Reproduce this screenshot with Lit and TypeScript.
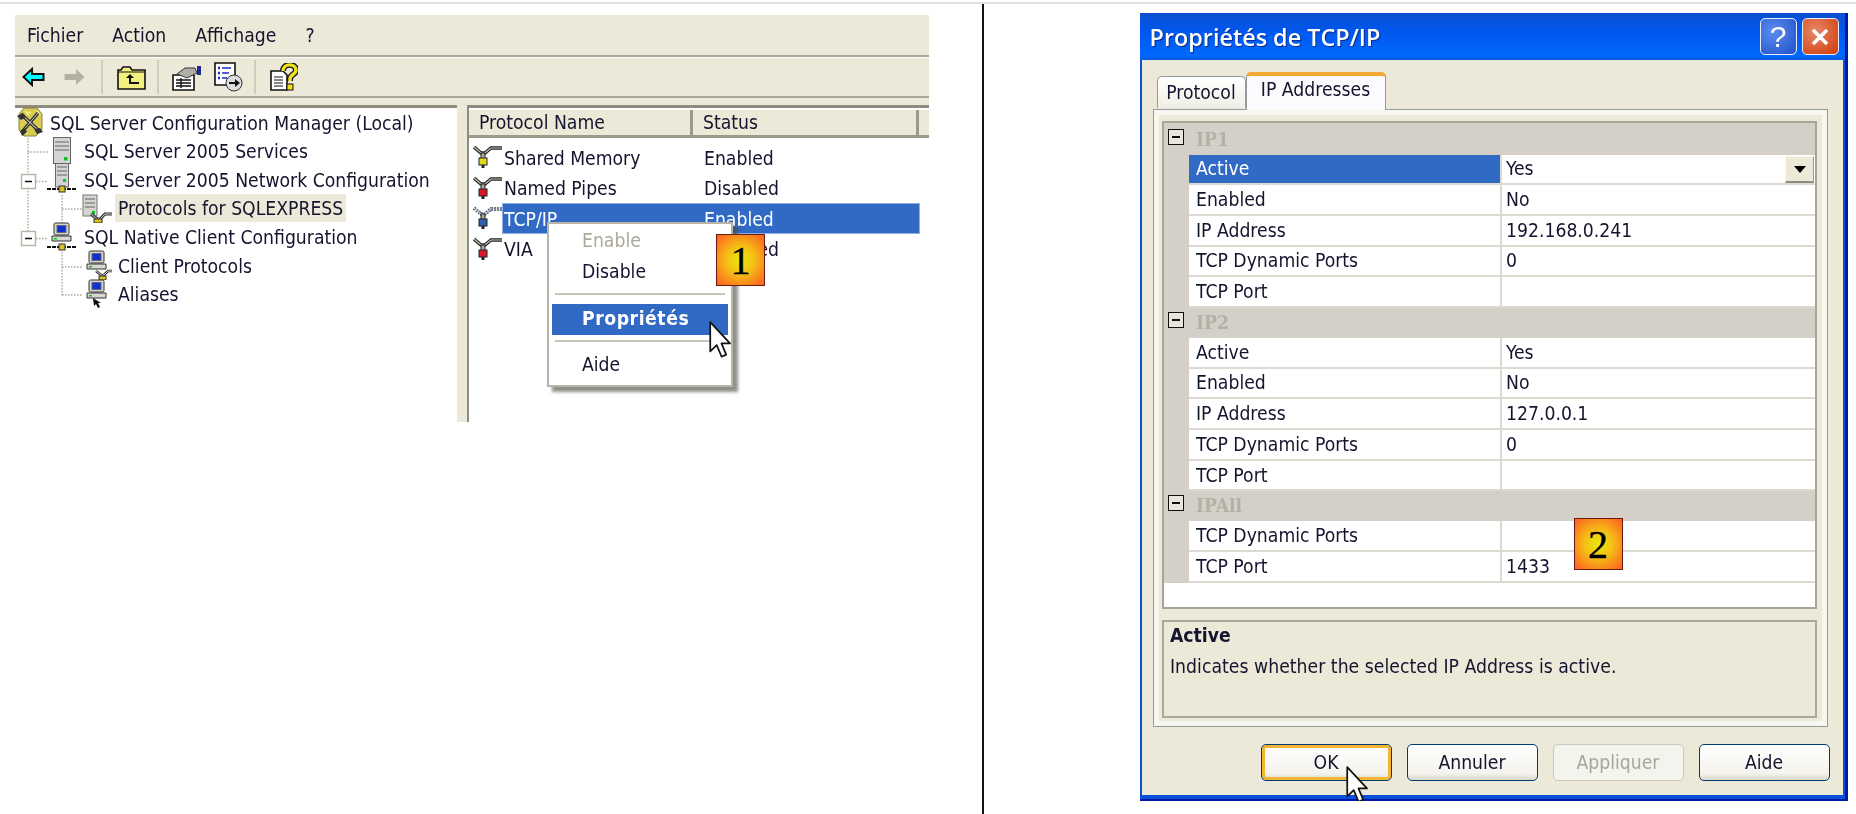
import { LitElement, html, svg, css } from "lit";
import { customElement } from "lit/decorators.js";

const cursor = html`<svg width="23" height="38" viewBox="0 0 12 20"><path d="M.6.6V16L4 12.7 6.6 18.8 9 17.7 6.5 11.8H11Z" fill="#fff" stroke="#111" stroke-width=".9" stroke-linejoin="round"/></svg>`;

const proto = (c: string, dotted = false) => html`<svg width="29" height="24" viewBox="0 0 29 24">
  <path d="M1 2l7 6h4l6-5h11" fill="none" stroke="${dotted ? "#3a4a70" : "#222"}" stroke-width="3.4" stroke-dasharray="${dotted ? "2 1" : "none"}"/>
  <path d="M1 2l7 6h4l6-5h11" fill="none" stroke="#c8c8c0" stroke-width="1.2"/>
  <rect x="8" y="8" width="4" height="6" fill="#a8a8a0" stroke="#222"/>
  <rect x="6" y="13" width="8" height="7" fill="${c}" stroke="#222"/>
  <rect x="8.5" y="20" width="3" height="3" fill="#222"/></svg>`;

const netBase = svg`<path d="M0 25H30" stroke="#111" stroke-width="2" stroke-dasharray="4 1"/><rect x="12" y="22" width="6" height="6" fill="#d8c020" stroke="#333"/>`;

const tower = html`<svg width="30" height="28" viewBox="0 0 30 28"><rect x="6.5" y=".5" width="17" height="26" fill="#d4d4d4" stroke="#666"/>
  <path d="M8 5h14M8 9h14M8 13h14" stroke="#8a8a8a" stroke-width="1.6"/><rect x="17" y="20" width="3.5" height="3.5" fill="#10c020"/></svg>`;

const towerNet = html`<svg width="30" height="30" viewBox="0 0 30 30"><rect x="8.5" y="-3" width="13" height="26" fill="#d4d4d4" stroke="#666"/>
  <path d="M10 3h10M10 7h10M10 11h10" stroke="#8a8a8a" stroke-width="1.6"/><rect x="16" y="15" width="3" height="3" fill="#12c020"/>${netBase}</svg>`;

const pc = (net: boolean, extra = "") => html`<svg width="30" height="30" viewBox="0 0 30 30">
  <rect x="7" y="1" width="15" height="12" rx="1.5" fill="#d4d4cc" stroke="#333"/><rect x="10" y="3.5" width="9" height="7" fill="#1030d0" stroke="#667"/>
  <path d="M5 14h19v5H5z" fill="#d8d8d0" stroke="#333"/><rect x="7" y="16" width="3" height="1.5" fill="#10c020"/>
  ${net ? netBase : ""}
  ${extra === "y" ? svg`<path d="M14 21l5 4h3l4-4h4" fill="none" stroke="#333" stroke-width="2.6"/><path d="M14 21l5 4h3l4-4h4" fill="none" stroke="#ccc" stroke-width="1"/><rect x="17" y="26" width="7" height="4" fill="#d8c020" stroke="#333"/>` : ""}
  ${extra === "a" ? svg`<path d="M11 19l1 8 2-2 2 4 2-1-2-4h3z" fill="#111"/>` : ""}
</svg>`;

const proto2 = html`<svg width="30" height="29" viewBox="0 0 30 29">
  <rect x="1" y="1" width="14" height="21" fill="#d4d4d0" stroke="#777"/><path d="M3 5h10M3 9h10M3 13h10" stroke="#888" stroke-width="1.5"/><rect x="10" y="17" width="3" height="3" fill="#10c020"/>
  <path d="M9 20l6 5h3l5-5h7" fill="none" stroke="#333" stroke-width="3"/><path d="M9 20l6 5h3l5-5h7" fill="none" stroke="#ccc" stroke-width="1"/><rect x="12" y="25" width="8" height="4" fill="#d8c020" stroke="#333"/></svg>`;

const rootIcon = html`<svg width="28" height="30" viewBox="0 0 28 30">
  <path d="M8 1h13l5 6v15l-6 7H8l-5-6V7z" fill="#d8cc50" stroke="#8a8040"/>
  <path d="M9 4l3 3 3-2M21 4l3 4M8 24l3 3M20 25l4-4" fill="none" stroke="#f4ec80" stroke-width="2"/>
  <path d="M5 7l17 16M22 6L6 25" stroke="#222" stroke-width="3.4"/><path d="M5 7l17 16M22 6L6 25" stroke="#bbb" stroke-width="1.1"/>
  <path d="M1 9l6-3 3 4-5 3zM18 22l6-1 3 4-6 2zM4 24l5-3 2 4-5 4z" fill="#333"/></svg>`;

const backIcon = html`<svg width="23" height="20" viewBox="0 0 23 20"><path d="M1.5 10L10 2v5h11.5v6H10v5z" fill="#00ffff" stroke="#111" stroke-width="2"/></svg>`;
const fwdIcon = html`<svg width="23" height="20" viewBox="0 0 23 20"><path d="M21.5 10L13 2v5H1.5v6H13v5z" fill="#b4b1a0"/></svg>`;

const folderUp = html`<svg width="29" height="25" viewBox="0 0 29 25"><path d="M1 5h3l2-3h7l2 3h13v19H1z" fill="#f4f080" stroke="#111" stroke-width="1.6"/><path d="M1 7h27" stroke="#111"/><path d="M9 13l4-4 4 4h-3v4h8v2H12v-6z" fill="#111"/></svg>`;
const propsIcon = html`<svg width="31" height="27" viewBox="0 0 31 27"><path d="M2 11h21v15H2z" fill="#fff" stroke="#111" stroke-width="1.6"/><path d="M5 16h15M5 19h15M5 22h15M10 14v10" stroke="#111" stroke-width="1.4"/><path d="M6 10l8-6h10l2 5-10 5z" fill="#b0b0a8" stroke="#333"/><rect x="26" y="2" width="4" height="9" fill="#1a2a90"/></svg>`;
const exportIcon = html`<svg width="31" height="30" viewBox="0 0 31 30"><path d="M2 1h20v22H2z" fill="#fff" stroke="#111" stroke-width="1.6"/><path d="M5 6h2M5 11h2M5 16h2" stroke="#1a2ac0" stroke-width="2.4"/><path d="M9 6h9M9 11h7M9 16h5" stroke="#1a2ac0" stroke-width="1.4"/><circle cx="21" cy="21" r="8" fill="#ddd" stroke="#333"/><path d="M16 20h6v-3l5 4-5 4v-3h-6z" fill="#111"/></svg>`;
const helpIcon = html`<svg width="28" height="28" viewBox="0 0 28 28"><path d="M1 8h12l4 4v15H1z" fill="#fff" stroke="#111" stroke-width="1.6"/><path d="M4 14h9M4 17h9M4 20h9M4 23h9" stroke="#111"/><path d="M13 8c0-8 13-8 13-1 0 5-6 4-6 9v2" fill="none" stroke="#111" stroke-width="6"/><path d="M13 8c0-8 13-8 13-1 0 5-6 4-6 9v2" fill="none" stroke="#f0e020" stroke-width="3.4"/><rect x="17" y="21" width="6" height="6" fill="#f0e020" stroke="#111"/></svg>`;

const guides = html`<svg class="guides" width="120" height="230" viewBox="0 0 120 230">
  <path d="M13 30V66M13 80V123M13 44H33M47 87V187M47 101H67M47 159H67M47 187H67" fill="none" stroke="#a8a898" stroke-width="1.4" stroke-dasharray="1.5 1.5"/>
  <g fill="#fff" stroke="#b4b4a4" stroke-width="1.4"><rect x="6.5" y="66.5" width="14" height="14"/><rect x="6.5" y="123.5" width="14" height="14"/></g>
  <path d="M10 73.5h7M10 130.5h7" stroke="#111" stroke-width="1.6"/>
  <path d="M21 73.5H33M21 130.5H33" stroke="#a8a898" stroke-width="1.4" stroke-dasharray="1.5 1.5"/>
</svg>`;

@customElement("app-root")
export class AppRoot extends LitElement {
  static styles = css`
    :host { display: block; height: 814px; overflow: hidden; background: #fff; font-family: "DejaVu Sans", "Liberation Sans", sans-serif; font-stretch: condensed; font-size: 19.2px; color: #14142e; }
    .rule { height: 2px; margin-top: 2px; background: #e2e2e2; }
    .main { display: flex; height: 810px; }
    .left { width: 982px; flex: none; padding: 11px 0 0 15px; box-sizing: border-box; position: relative; }
    .vline { width: 1.5px; flex: none; background: #111; }
    .right { flex: 1; padding: 9px 0 0 156px; box-sizing: border-box; }

    .win { width: 914px; height: 407px; display: flex; flex-direction: column; background: #ece9d8; filter: blur(.35px); position: relative; overflow: hidden; }
    .menubar { height: 40px; display: flex; align-items: center; gap: 29px; padding-left: 12px; border-bottom: 2px solid #aca899; flex: none; }
    .toolbar { height: 41px; flex: none; display: flex; align-items: center; border-top: 1px solid #fff; border-bottom: 2px solid #aca899; box-sizing: border-box; padding-left: 7px; }
    .toolbar svg { display: block; flex: none; }
    .tsep { width: 2px; height: 34px; background: #d0cdbc; flex: none; }
    .g18 { margin-left: 18px; } .g15 { margin-left: 15px; } .g14 { margin-left: 14px; } .g11 { margin-left: 11px; } .g12 { margin-left: 12px; } .g10 { margin-left: 10px; }
    .panes { flex: 1; display: flex; padding-top: 7px; min-height: 0; }
    .tree { width: 442px; flex: none; background: #fff; border-top: 3px solid #8e8c7e; position: relative; box-sizing: border-box; }
    .guides { position: absolute; left: 0; top: 0; }
    .trow { height: 28.6px; display: flex; align-items: center; position: relative; white-space: nowrap; }
    .trow svg { display: block; flex: none; }
    .tx { padding-top: 2px; }
    .ic { width: 30px; flex: none; display: flex; justify-content: center; align-items: center; height: 28.6px; }
    .r0 { padding-left: 1px; } .r0 .ic { width: 28px; margin-right: 6px; }
    .r1 { padding-left: 32px; } .r1 .ic { margin-right: 7px; }
    .r2 { padding-left: 67px; } .r2 .ic { margin-right: 6px; }
    .cur { background: #ece9d8; padding: 0 3px; height: 28px; line-height: 29px; margin-left: -3px; }
    .splitter { width: 10px; flex: none; }
    .list { flex: 1; background: #fff; border-left: 2px solid #8e8c7e; border-top: 3px solid #8e8c7e; position: relative; min-width: 0; }
    .lhead { display: flex; height: 30px; background: #ece9d8; border-bottom: 3px solid #9c9a8c; border-top: 2px solid #fff; box-sizing: border-box; }
    .lhead div { display: flex; align-items: center; box-sizing: border-box; border-right: 3px solid #9c9a8c; flex: none; }
    .h1 { width: 224px; padding-left: 10px; } .h2 { width: 226px; padding-left: 10px; }
    .lbody { padding-top: 4px; }
    .lrow { height: 30.5px; display: flex; align-items: center; padding-left: 4px; }
    .lrow svg { flex: none; display: block; }
    .lcell { width: 418px; height: 100%; display: flex; align-items: center; flex: none; box-sizing: border-box; border: 1px solid transparent; padding-top: 2px; white-space: nowrap; }
    .lname { width: 201px; padding-left: 1px; box-sizing: border-box; flex: none; }
    .sel { background: #316ac5; border-color: #8fb0e4; color: #fff; }

    .ctx { position: absolute; left: 532px; top: 207px; width: 186px; height: 165px; box-sizing: border-box; background: #fff; border: 2px solid #b8b5a6; box-shadow: 5px 5px 3px rgba(70,70,60,.6); padding: 2px 0 4px; }
    .mi { height: 31px; display: flex; align-items: center; padding-left: 33px; padding-bottom: 2px; box-sizing: border-box; }
    .dis { color: #aca899; }
    .hot { background: #316ac5; color: #fff; font-weight: 700; margin: 0 3px 0 3px; padding-left: 30px; letter-spacing: .55px; }
    .msep { height: 2px; background: #c8c5b6; margin: 5px 6px 9px; }
    .msep2 { height: 2px; background: #c8c5b6; margin: 5px 6px 8px; }

    .overlay { position: absolute; display: block; }
    .badge { position: absolute; width: 49px; height: 52px; box-sizing: border-box; border: 1.5px solid #6a1a10; background: radial-gradient(circle at 50% 50%, #e8ea10 0%, #f4c014 40%, #ff5a24 100%); font-family: "Liberation Serif", serif; font-size: 40px; -webkit-text-stroke: .4px #000; color: #000; display: flex; align-items: center; justify-content: center; font-stretch: normal; }
    .b1 { left: 716px; top: 230px; }
    .b2 { left: 434px; top: 505px; }
    .c1 { left: 709px; top: 317px; }
    .c2 { left: 206px; top: 753px; }
    .dwrap { width: 708px; height: 788px; overflow: hidden; position: relative; }

    .dlg { width: 708px; height: 788px; box-sizing: border-box; display: flex; flex-direction: column; background: #0a50dc; filter: blur(.3px); border-right: 3px solid #0018a8; border-bottom: 2px solid #0018a8; }
    .title { height: 47px; flex: none; background: linear-gradient(#0a4fd0, #0058ee 40%, #0068ff 90%, #0a5ae0); display: flex; align-items: center; padding: 0 6px 0 10px; gap: 5px; color: #fff; }
    .ttext { flex: 1; font-family: "Open Sans", sans-serif; font-stretch: normal; font-weight: 600; font-size: 23.4px; text-shadow: 1px 1px 1px #0a2a90; }
    .tbtn { width: 37px; height: 37px; box-sizing: border-box; border: 1.5px solid #e8eefc; border-radius: 5px; display: flex; align-items: center; justify-content: center; color: #fff; font-family: "Liberation Sans", sans-serif; font-stretch: normal; font-size: 30px; }
    .thelp { background: radial-gradient(circle at 35% 35%, #5c8cf0, #2a5cd0 80%); font-weight: 400; }
    .tclose { background: radial-gradient(circle at 35% 35%, #e88a68, #d4481c 80%); }
    .tclose svg, .tbtn svg { display: block; }
    .body { flex: 1; margin: 0 2px 4px 2px; background: #ece9d8; display: flex; flex-direction: column; min-height: 0; }
    .tabs { height: 37px; margin: 12px 0 0 15px; display: flex; align-items: flex-end; flex: none; position: relative; z-index: 1; }
    .tab { height: 32px; width: 89px; box-sizing: border-box; border: 1.5px solid #919b9c; border-bottom: 0; border-radius: 5px 5px 0 0; background: linear-gradient(#fff, #f0efe6); display: flex; align-items: center; justify-content: center; margin-bottom: 1px; }
    .tab.on { height: 38px; width: 140px; background: #fbfbfd; border-top: 4px solid #f2a832; border-color: #f2a832 #919b9c #fbfbfd; margin-bottom: -1px; align-items: flex-start; padding-top: 2px; }
    .tpanel { margin-left: 11px; width: 675px; height: 618px; flex: none; box-sizing: border-box; border: 1.5px solid #919b9c; box-shadow: inset 0 0 0 5px #f7f6f0; padding: 10.5px 9.5px 0 8.5px; display: flex; flex-direction: column; }
    .grid { height: 488px; flex: none; box-sizing: border-box; border: 2px solid #a8a598; background: #fff; }
    .cat { height: 30px; background: #d4d0c8; display: flex; color: #b4b0a6; font-weight: 700; line-height: 30px; font-family: "DejaVu Serif", serif; }
    .cat.first { height: 32px; padding-top: 2px; box-sizing: border-box; }
    .box { width: 16px; height: 16px; box-sizing: border-box; border: 1.5px solid #111; background: #e8e5dc; margin: 4px 12px 0 4px; display: flex; align-items: center; justify-content: center; flex: none; }
    .box::after { content: ""; display: block; width: 8px; height: 2px; background: #111; }
    .prow { height: 30.7px; display: grid; grid-template-columns: 25px 313px 1fr; }
    .gut { background: #d4d0c8; }
    .pname, .pval { display: flex; align-items: center; box-sizing: border-box; border-bottom: 2px solid #dcd9d0; white-space: nowrap; }
    .pname { padding-left: 7px; border-right: 2px solid #dcd9d0; }
    .pval { padding-left: 4px; justify-content: space-between; }
    .psel { background: #316ac5; color: #fff; }
    .dd { width: 29px; height: 27px; margin-right: 1px; align-self: flex-end; box-sizing: border-box; background: #ece9d8; border: 1px solid #f8f7f0; border-right-color: #9c9a8c; border-bottom: 2px solid #8e8c7e; display: flex; align-items: center; justify-content: center; }
    .dd::after { content: ""; border: 6px solid transparent; border-top: 7px solid #000; border-bottom: 0; }
    .desc { height: 98px; margin-top: 11px; flex: none; box-sizing: border-box; border: 2px solid #aca899; padding: 3px 0 0 6px; display: flex; flex-direction: column; gap: 9px; }
    .desc b { line-height: 22px; } .desc span { line-height: 22px; white-space: nowrap; letter-spacing: .03px; }
    .foot { display: flex; gap: 15px; padding: 17px 0 0 119px; flex: none; }
    .btn { width: 131px; height: 37px; box-sizing: border-box; border: 1.5px solid #003c74; border-radius: 5px; background: linear-gradient(#fff, #f4f3ee 80%, #dcd8cc); display: flex; align-items: center; justify-content: center; }
    .def { box-shadow: inset 0 0 0 3px #f5b432; }
    .off { border-color: #cac8bb; background: #f4f4ee; color: #a8a698; }
  `;

  private prow(n: string, v: string, sel = false) {
    return html`<div class="prow"><div class="gut"></div>
      <div class="pname ${sel ? "psel" : ""}">${n}</div>
      <div class="pval"><span>${v}</span>${sel ? html`<div class="dd"></div>` : ""}</div></div>`;
  }

  render() {
    return html`
      <div class="rule"></div>
      <div class="main">
        <section class="left">
          <div class="win">
            <div class="menubar"><span>Fichier</span><span>Action</span><span>Affichage</span><span>?</span></div>
            <div class="toolbar">
              ${backIcon}<span class="g18"></span>${fwdIcon}
              <span class="g15"></span><div class="tsep"></div><span class="g14"></span>${folderUp}
              <span class="g11"></span><div class="tsep"></div><span class="g12"></span>${propsIcon}
              <span class="g11"></span>${exportIcon}<span class="g10"></span><div class="tsep"></div><span class="g14"></span>${helpIcon}
            </div>
            <div class="panes">
              <div class="tree">
                ${guides}
                <div class="trow r0"><span class="ic">${rootIcon}</span><span class="tx">SQL Server Configuration Manager (Local)</span></div>
                <div class="trow r1"><span class="ic">${tower}</span><span class="tx">SQL Server 2005 Services</span></div>
                <div class="trow r1"><span class="ic">${towerNet}</span><span class="tx">SQL Server 2005 Network Configuration</span></div>
                <div class="trow r2"><span class="ic">${proto2}</span><span class="cur">Protocols for SQLEXPRESS</span></div>
                <div class="trow r1"><span class="ic">${pc(true)}</span><span class="tx">SQL Native Client Configuration</span></div>
                <div class="trow r2"><span class="ic">${pc(false, "y")}</span><span class="tx">Client Protocols</span></div>
                <div class="trow r2"><span class="ic">${pc(false, "a")}</span><span class="tx">Aliases</span></div>
              </div>
              <div class="splitter"></div>
              <div class="list">
                <div class="lhead"><div class="h1">Protocol Name</div><div class="h2">Status</div></div>
                <div class="lbody">
                  <div class="lrow">${proto("#e0d820")}<div class="lcell"><span class="lname">Shared Memory</span>Enabled</div></div>
                  <div class="lrow">${proto("#d81828")}<div class="lcell"><span class="lname">Named Pipes</span>Disabled</div></div>
                  <div class="lrow">${proto("#3060b0", true)}<div class="lcell sel"><span class="lname">TCP/IP</span>Enabled</div></div>
                  <div class="lrow">${proto("#d81828")}<div class="lcell"><span class="lname">VIA</span>Disabled</div></div>
                </div>
              </div>
            </div>
            <div class="ctx">
              <div class="mi dis">Enable</div>
              <div class="mi">Disable</div>
              <div class="msep"></div>
              <div class="mi hot">Propriétés</div>
              <div class="msep2"></div>
              <div class="mi">Aide</div>
            </div>
          </div>
          <div class="badge b1">1</div>
          <span class="overlay c1">${cursor}</span>
        </section>
        <div class="vline"></div>
        <section class="right">
          <div class="dwrap">
            <div class="dlg">
              <div class="title"><span class="ttext">Propriétés de TCP/IP</span>
                <div class="tbtn thelp">?</div>
                <div class="tbtn tclose"><svg width="22" height="22" viewBox="0 0 22 22"><path d="M4 4L18 18M18 4L4 18" stroke="#fff" stroke-width="3.6"/></svg></div>
              </div>
              <div class="body">
                <div class="tabs"><div class="tab">Protocol</div><div class="tab on">IP Addresses</div></div>
                <div class="tpanel">
                  <div class="grid">
                    <div class="cat first"><span class="box"></span>IP1</div>
                    ${this.prow("Active", "Yes", true)}
                    ${this.prow("Enabled", "No")}
                    ${this.prow("IP Address", "192.168.0.241")}
                    ${this.prow("TCP Dynamic Ports", "0")}
                    ${this.prow("TCP Port", "")}
                    <div class="cat"><span class="box"></span>IP2</div>
                    ${this.prow("Active", "Yes")}
                    ${this.prow("Enabled", "No")}
                    ${this.prow("IP Address", "127.0.0.1")}
                    ${this.prow("TCP Dynamic Ports", "0")}
                    ${this.prow("TCP Port", "")}
                    <div class="cat"><span class="box"></span>IPAll</div>
                    ${this.prow("TCP Dynamic Ports", "")}
                    ${this.prow("TCP Port", "1433")}
                  </div>
                  <div class="desc"><b>Active</b><span>Indicates whether the selected IP Address is active.</span></div>
                </div>
                <div class="foot">
                  <div class="btn def">OK</div><div class="btn">Annuler</div><div class="btn off">Appliquer</div><div class="btn">Aide</div>
                </div>
              </div>
            </div>
            <div class="badge b2">2</div>
            <span class="overlay c2">${cursor}</span>
          </div>
        </section>
      </div>`;
  }
}
